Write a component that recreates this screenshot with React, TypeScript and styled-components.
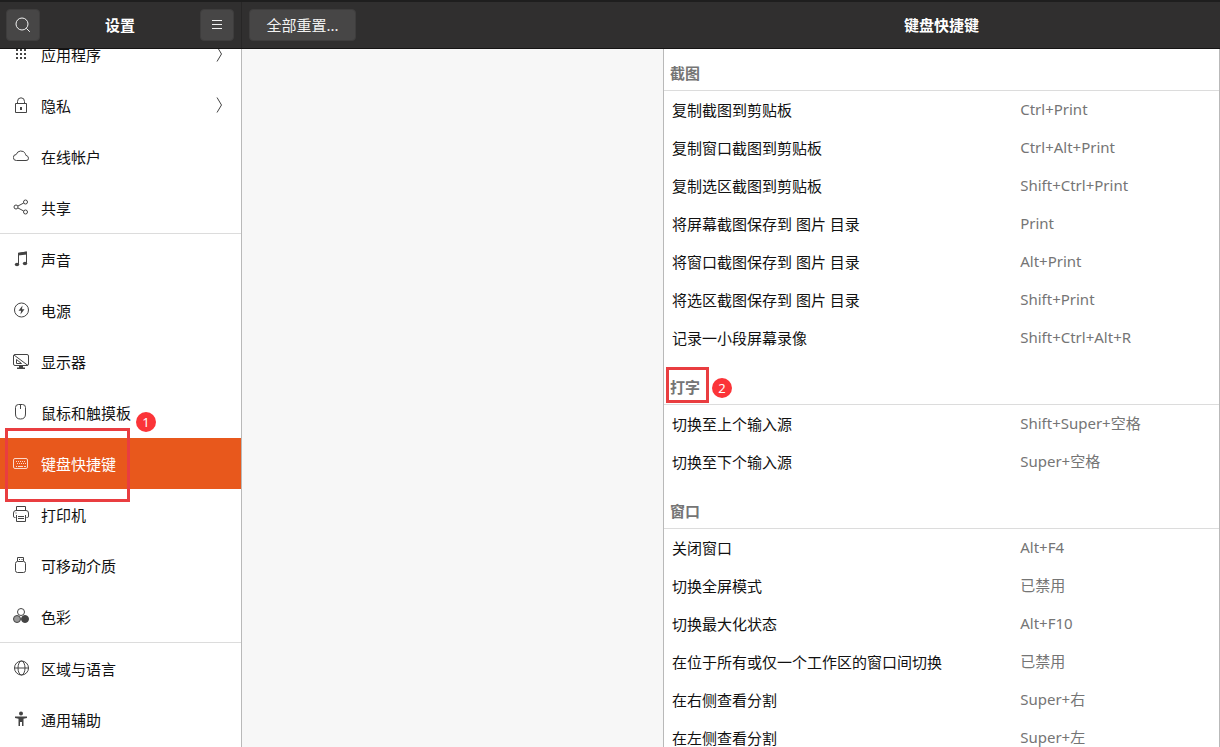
import React from "react";
import styled, { createGlobalStyle } from "styled-components";

const GlobalStyle = createGlobalStyle`
  * { box-sizing: border-box; }
  body {
    margin: 0;
    background: #f7f7f7;
    color: #111;
    font-family: "Noto Sans", "Noto Sans CJK SC", sans-serif;
    font-size: 15px;
    line-height: 20px;
  }
`;

const Window = styled.div`
  display: flex;
  flex-direction: column;
  height: 100vh;
`;

const HeaderBar = styled.header`
  display: flex;
  flex: none;
  height: 49px;
  background: #302f2f;
  border-top: 2px solid #1e1e1e;
  border-bottom: 1px solid #151414;
  color: #fff;
`;

const SidebarHeader = styled.div`
  display: flex;
  flex: none;
  align-items: center;
  justify-content: space-between;
  width: 242px;
  padding: 0 7px 0 6px;
  border-right: 1px solid #272626;
`;

const PageHeader = styled.div`
  display: grid;
  flex: 1;
  grid-template-columns: 421fr 557fr;
  align-items: center;
`;

const Title = styled.h1`
  margin: 0;
  font-size: 15px;
  line-height: 20px;
  font-weight: 700;
  text-align: center;
`;

const HeaderButton = styled.button<{ $wide?: boolean }>`
  display: inline-flex;
  align-items: center;
  justify-content: center;
  width: ${(p) => (p.$wide ? "107px" : "34px")};
  height: 32px;
  padding: 0;
  border: 1px solid #3e3d3d;
  border-radius: 4px;
  background: #474646;
  color: #f2f2f2;
  font: inherit;
`;

const ResetArea = styled.div`
  display: flex;
  padding-left: 7px;
`;

const Body = styled.div`
  display: flex;
  flex: 1;
  min-height: 0;
`;

const Sidebar = styled.nav`
  flex: none;
  width: 242px;
  overflow-y: auto;
  scrollbar-width: none;
  background: #fff;
  border-right: 1px solid #b9b9b9;
`;

const NavList = styled.ul`
  margin: -20px 0 0;
  padding: 0;
  list-style: none;
`;

const NavItem = styled.li<{ $divided?: boolean }>`
  position: relative;
  border-top: ${(p) => (p.$divided ? "1px solid #dcdcdc" : "0")};
`;

const NavLink = styled.a<{ $active?: boolean }>`
  display: flex;
  align-items: center;
  gap: 12px;
  height: 51px;
  padding: 0 17px 2px 13px;
  background: ${(p) => (p.$active ? "#e8581c" : "transparent")};
  color: ${(p) => (p.$active ? "#fff" : "#111")};
  text-decoration: none;
  & > svg { color: ${(p) => (p.$active ? "#fbd9cb" : "#444")}; }
`;

const NavLabel = styled.span`
  flex: 1;
  padding-top: 2px;
`;

const Icon = styled.svg`
  flex: none;
  display: block;
  fill: none;
  stroke: currentColor;
  stroke-width: 1;
`;

const Page = styled.main`
  display: grid;
  flex: 1;
  grid-template-columns: 421fr 557fr;
  min-width: 0;
`;

const ListPane = styled.section`
  grid-column: 2;
  overflow-y: auto;
  scrollbar-width: none;
  background: #fff;
  border: solid #b9b9b9;
  border-width: 0 1px;
`;

const ShortcutTable = styled.table`
  width: 100%;
  margin-top: -7px;
  border-collapse: collapse;
  table-layout: fixed;
  text-align: left;
`;

const NameColumn = styled.col`
  width: 64%;
`;

const SectionHeading = styled.th`
  position: relative;
  height: 48px;
  padding: 14px 6px 0;
  border-bottom: 1px solid #dcdcdc;
  color: #757575;
  font-weight: 700;
`;

const NameCell = styled.th`
  height: 38px;
  padding: 2px 8px 0;
  font-weight: 400;
`;

const KeysCell = styled.td`
  height: 38px;
  padding: 0 1px;
  color: #757575;
`;

const Frame = styled.span<{ $x: number; $y: number; $w: number; $h: number }>`
  position: absolute;
  left: ${(p) => p.$x}px;
  top: ${(p) => p.$y}px;
  width: ${(p) => p.$w}px;
  height: ${(p) => p.$h}px;
  z-index: 1;
  border: 3px solid #e93d40;
  pointer-events: none;
`;

const Badge = styled.span<{ $x: number; $y: number }>`
  position: absolute;
  left: ${(p) => p.$x}px;
  top: ${(p) => p.$y}px;
  z-index: 1;
  width: 20px;
  height: 20px;
  border-radius: 50%;
  background: #fb3438;
  color: #fff;
  font-size: 13px;
  font-weight: 400;
  line-height: 20px;
  text-align: center;
`;

const drawings: Record<string, React.ReactNode> = {
  apps: (
    <g fill="currentColor" stroke="none">
      {[3, 7, 11].map((x) => [3, 7, 11].map((y) => <rect key={`${x}-${y}`} x={x} y={y} width="2" height="2" />))}
    </g>
  ),
  lock: (
    <>
      <path d="M2.500 6.500h11v9h-11z M4.500 6.500V4.500a3.500 3.700 0 0 1 7 0v2" />
      <path d="M8 10v3" strokeWidth="2" />
    </>
  ),
  cloud: <path d="M3.500 12.500a3 3 0 0 1-.3-6A5 5 0 0 1 12.300 5.500q.4.800.3 1.600Q15.500 8 15.500 10.200a2.300 2.300 0 0 1-2.500 2.300z" />,
  share: (
    <>
      <circle cx="3" cy="8" r="2" />
      <circle cx="12.500" cy="3" r="2" />
      <circle cx="12.500" cy="13" r="2" />
      <path d="M5 7l5.700-3M5 9l5.700 3" />
    </>
  ),
  sound: (
    <>
      <path d="M5.500 13V2.500l8-1.500v11" />
      <path d="M5 1.800L14 .5v3L5 4.500z" fill="currentColor" stroke="none" />
      <ellipse cx="4" cy="13.500" rx="2.200" ry="1.800" fill="currentColor" stroke="none" />
      <ellipse cx="12" cy="12.500" rx="2.200" ry="1.800" fill="currentColor" stroke="none" />
    </>
  ),
  power: (
    <>
      <circle cx="8.500" cy="8" r="7" />
      <path d="M9.500 3.500L5.500 8.700h2.600L7.500 12.500l4-5.200H9z" fill="currentColor" stroke="none" />
    </>
  ),
  display: (
    <>
      <rect x=".5" y="1.500" width="15" height="11" rx="1.500" />
      <path d="M1 2l14 10.500M3.500 6.500v4h5z" />
      <path d="M6 13h4v1.500h2V16H4v-1.500h2z" fill="currentColor" stroke="none" />
    </>
  ),
  mouse: <path d="M5.500.5h4q3 0 3 3V10q0 5-5 5t-5-5V3.500q0-3 3-3zM7.500.5V5" />,
  keyboard: (
    <>
      <rect x=".5" y="3.500" width="14" height="10" rx="1.500" />
      <path d="M3 6.500h10M4 8.500h9" strokeDasharray="1 1" />
      <path d="M3 11.500h1M5 11.500h5M11 11.500h2" />
    </>
  ),
  printer: (
    <>
      <path d="M3.500 4V.5h9V4M2.500 11.500h-1Q.5 11.500.5 10V7q0-2.500 2.500-2.500h10q2.500 0 2.500 2.500v3q0 1.500-1 1.500h-1M3.500 9v6.500h9V9" />
      <path d="M5 10.500h6M5 12.500h6M2.500 7h1" />
    </>
  ),
  usb: (
    <>
      <rect x="2.500" y="4.500" width="10" height="11" rx="2" />
      <path d="M4.500 4V.5h6V4M6 2.500h1M8.500 2.500h1" />
    </>
  ),
  color: (
    <>
      <circle cx="8" cy="4" r="3.500" />
      <circle cx="4" cy="11" r="3.500" fill="#9a9a9a" />
      <circle cx="12" cy="11" r="3.500" fill="currentColor" />
    </>
  ),
  globe: (
    <>
      <circle cx="8.500" cy="8" r="7" />
      <ellipse cx="8.500" cy="8" rx="3.500" ry="7" />
      <path d="M1.500 8h14" />
    </>
  ),
  access: (
    <>
      <circle cx="8" cy="2.500" r="2" fill="currentColor" stroke="none" />
      <path d="M2 5.500h12V7l-3.500.8V15H9v-4H7v4H5.500V7.800L2 7z" fill="currentColor" stroke="none" />
    </>
  ),
};

type Item = { icon: string; label: string; more?: boolean; divided?: boolean; active?: boolean };

const items: Item[] = [
  { icon: "apps", label: "应用程序", more: true },
  { icon: "lock", label: "隐私", more: true },
  { icon: "cloud", label: "在线帐户" },
  { icon: "share", label: "共享" },
  { icon: "sound", label: "声音", divided: true },
  { icon: "power", label: "电源" },
  { icon: "display", label: "显示器" },
  { icon: "mouse", label: "鼠标和触摸板" },
  { icon: "keyboard", label: "键盘快捷键", active: true },
  { icon: "printer", label: "打印机" },
  { icon: "usb", label: "可移动介质" },
  { icon: "color", label: "色彩" },
  { icon: "globe", label: "区域与语言", divided: true },
  { icon: "access", label: "通用辅助" },
];

const sections: { title: string; marked?: boolean; rows: [string, string][] }[] = [
  {
    title: "截图",
    rows: [
      ["复制截图到剪贴板", "Ctrl+Print"],
      ["复制窗口截图到剪贴板", "Ctrl+Alt+Print"],
      ["复制选区截图到剪贴板", "Shift+Ctrl+Print"],
      ["将屏幕截图保存到 图片 目录", "Print"],
      ["将窗口截图保存到 图片 目录", "Alt+Print"],
      ["将选区截图保存到 图片 目录", "Shift+Print"],
      ["记录一小段屏幕录像", "Shift+Ctrl+Alt+R"],
    ],
  },
  {
    title: "打字",
    marked: true,
    rows: [
      ["切换至上个输入源", "Shift+Super+空格"],
      ["切换至下个输入源", "Super+空格"],
    ],
  },
  {
    title: "窗口",
    rows: [
      ["关闭窗口", "Alt+F4"],
      ["切换全屏模式", "已禁用"],
      ["切换最大化状态", "Alt+F10"],
      ["在位于所有或仅一个工作区的窗口间切换", "已禁用"],
      ["在右侧查看分割", "Super+右"],
      ["在左侧查看分割", "Super+左"],
    ],
  },
];

export default function App() {
  return (
    <Window lang="zh-CN">
      <GlobalStyle />
      <HeaderBar>
        <SidebarHeader>
          <HeaderButton type="button" aria-label="搜索">
            <Icon width="16" height="16" viewBox="0 0 16 16">
              <circle cx="7" cy="7" r="6" />
              <path d="M11.300 11.300l3.500 3.500" />
            </Icon>
          </HeaderButton>
          <Title>设置</Title>
          <HeaderButton type="button" aria-label="菜单">
            <Icon width="16" height="16" viewBox="0 0 16 16">
              <path d="M3 3.500h10M3 7.500h10M3 11.500h10" />
            </Icon>
          </HeaderButton>
        </SidebarHeader>
        <PageHeader>
          <ResetArea>
            <HeaderButton type="button" $wide>全部重置...</HeaderButton>
          </ResetArea>
          <Title as="h2">键盘快捷键</Title>
        </PageHeader>
      </HeaderBar>
      <Body>
        <Sidebar>
          <NavList>
            {items.map((item) => (
              <NavItem key={item.label} $divided={item.divided}>
                <NavLink href="#" $active={item.active} aria-current={item.active ? "page" : undefined}>
                  <Icon width="16" height="16" viewBox="0 0 16 16">{drawings[item.icon]}</Icon>
                  <NavLabel>{item.label}</NavLabel>
                  {item.more && (
                    <Icon width="10" height="16" viewBox="0 0 10 16">
                      <path d="M3 .5L7.500 8 3 15.500" />
                    </Icon>
                  )}
                </NavLink>
                {item.active && (
                  <>
                    <Frame $x={5} $y={-10} $w={125} $h={74} />
                    <Badge $x={136} $y={-26}>1</Badge>
                  </>
                )}
              </NavItem>
            ))}
          </NavList>
        </Sidebar>
        <Page>
          <ListPane>
            <ShortcutTable>
              <colgroup>
                <NameColumn />
                <col />
              </colgroup>
              {sections.map((section) => (
                <tbody key={section.title}>
                  <tr>
                    <SectionHeading colSpan={2} scope="rowgroup">
                      {section.title}
                      {section.marked && (
                        <>
                          <Frame $x={2} $y={11} $w={43} $h={36} />
                          <Badge $x={48} $y={22}>2</Badge>
                        </>
                      )}
                    </SectionHeading>
                  </tr>
                  {section.rows.map(([name, keys]) => (
                    <tr key={name}>
                      <NameCell scope="row">{name}</NameCell>
                      <KeysCell>{keys}</KeysCell>
                    </tr>
                  ))}
                </tbody>
              ))}
            </ShortcutTable>
          </ListPane>
        </Page>
      </Body>
    </Window>
  );
}
